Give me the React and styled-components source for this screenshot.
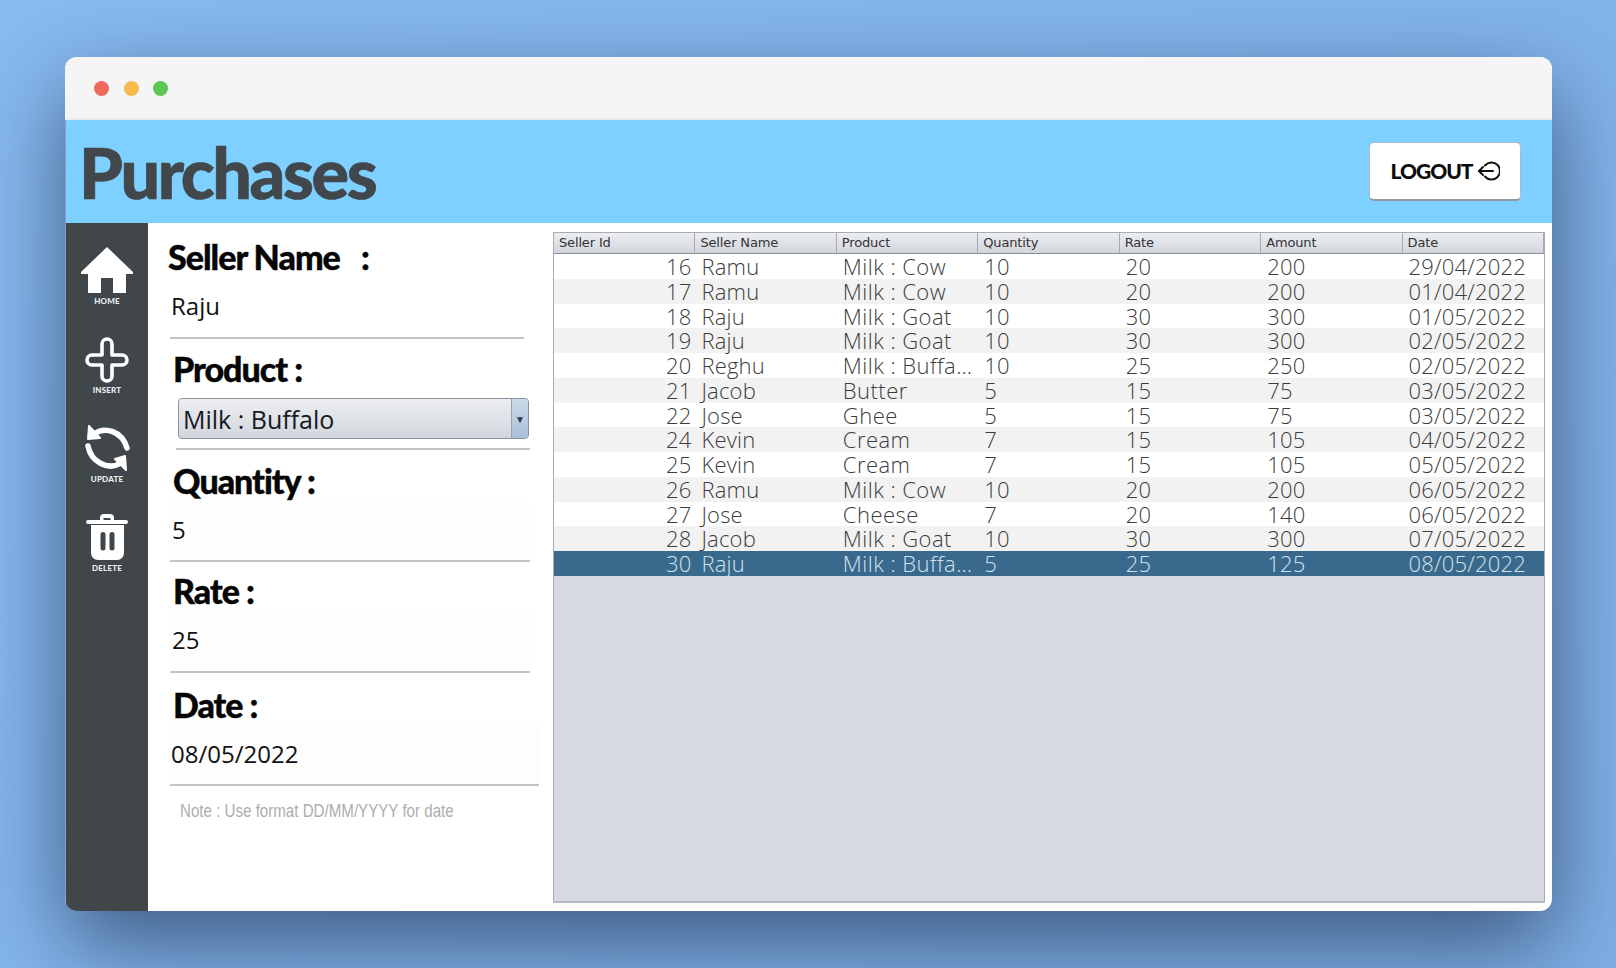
import React from "react";
import styled, { createGlobalStyle } from "styled-components";

const GlobalStyle = createGlobalStyle`
  html, body {
    margin: 0;
    padding: 0;
    height: 100%;
  }
  body {
    background: linear-gradient(135deg, #88bbf1 0%, #83b5ec 55%, #7fb0e6 100%);
    font-family: "Lato", "Liberation Sans", sans-serif;
    overflow: hidden;
  }
`;

const Page = styled.div`
  box-sizing: border-box;
  height: 968px;
  padding: 57px 64px 57px 65px;
`;

const Window = styled.div`
  height: 854px;
  display: flex;
  flex-direction: column;
  border-radius: 12px;
  overflow: hidden;
  background: #fff;
  box-shadow: 0 34px 90px rgba(25, 40, 70, 0.65);
`;

const TitleBar = styled.div`
  box-sizing: border-box;
  height: 63px;
  flex: none;
  display: flex;
  align-items: center;
  gap: 14.5px;
  padding: 2px 0 0 29px;
  background: #f5f5f5;
  border-bottom: 2px solid #ececec;
`;

const Dot = styled.span`
  width: 15px;
  height: 15px;
  border-radius: 50%;
  background: ${(p) => p.$color};
`;

const Header = styled.header`
  box-sizing: border-box;
  height: 103px;
  flex: none;
  display: flex;
  align-items: center;
  justify-content: space-between;
  padding: 0 31px 0 13px;
  background: #7dd0ff;
  border-left: 1px solid #8f9ac9;
`;

const Title = styled.h1`
  margin: 0;
  font-family: "Lato", sans-serif;
  font-weight: 900;
  font-size: 70px;
  line-height: 100px;
  letter-spacing: -2.4px;
  -webkit-text-stroke: 0.7px #41474b;
  color: #41474b;
`;

const LogoutButton = styled.button`
  box-sizing: border-box;
  width: 152px;
  height: 59px;
  margin-top: -1px;
  display: flex;
  align-items: center;
  justify-content: center;
  gap: 4px;
  background: #fff;
  border: 1px solid #a9bccb;
  border-bottom: 2px solid #8f9aa3;
  border-radius: 5px;
  font-family: "Lato", sans-serif;
  font-weight: 900;
  font-size: 21px;
  letter-spacing: -1px;
  color: #0c0c0c;
`;

const Body = styled.div`
  flex: 1;
  min-height: 0;
  display: flex;
  border-left: 1px solid #8f9ac9;
`;

const Sidebar = styled.nav`
  width: 82px;
  flex: none;
  display: flex;
  flex-direction: column;
  align-items: center;
  padding-top: 24px;
  background: #40464a;
`;

const NavItem = styled.div`
  height: 89px;
  display: flex;
  flex-direction: column;
  align-items: center;
  color: #fff;
`;

const NavIcon = styled.svg`
  width: 54px;
  height: 48px;
  display: block;
`;

const NavLabel = styled.span`
  margin-top: 1px;
  font-family: "Lato", sans-serif;
  font-size: 8px;
  line-height: 10px;
  font-weight: 900;
  letter-spacing: 0.2px;
  color: #eceeef;
`;

const Form = styled.section`
  width: 405px;
  flex: none;
  box-sizing: border-box;
  padding-left: 22px;
`;

const Field = styled.div`
  box-sizing: border-box;
  height: ${(p) => p.$height}px;
  width: ${(p) => p.$width || 360}px;
  margin-left: ${(p) => p.$shift || 0}px;
  display: flex;
  flex-direction: column;
  border-bottom: 2px solid #c3c4cb;
`;

const Label = styled.h2`
  margin: ${(p) => p.$top}px 0 0 ${(p) => p.$left}px;
  font-family: "Lato", sans-serif;
  font-weight: 900;
  font-size: 34px;
  line-height: 40px;
  letter-spacing: -1px;
  -webkit-text-stroke: 0.4px #060606;
  color: #060606;
`;

const Value = styled.div`
  flex: 1;
  display: flex;
  align-items: center;
  padding: 0 0 3px ${(p) => p.$left}px;
  font-family: "Open Sans", sans-serif;
  font-size: 24px;
  color: #111;
  background: ${(p) => (p.$tint ? "#fdfdfd" : "#fff")};
`;

const Combo = styled.div`
  box-sizing: border-box;
  width: 351px;
  height: 41px;
  margin: 9px 0 0 2px;
  display: flex;
  align-items: center;
  justify-content: space-between;
  padding-left: 4px;
  border: 1px solid #8c939c;
  border-radius: 4px;
  background: linear-gradient(#eceef1, #d3d6dd);
  font-family: "Open Sans", sans-serif;
  font-size: 25px;
  color: #151a24;
  overflow: hidden;
`;

const ComboArrow = styled.span`
  width: 16px;
  height: 100%;
  display: flex;
  align-items: center;
  justify-content: center;
  border-left: 1px solid #8fa5ba;
  background: linear-gradient(#c9d8e6, #a9c2d8);
  color: #33383f;
  font-size: 10px;
`;

const Note = styled.p`
  margin: 13px 0 0 10px;
  font-family: "Liberation Sans", sans-serif;
  font-size: 18px;
  line-height: 24px;
  white-space: nowrap;
  color: #adadad;
  transform: scaleX(0.84);
  transform-origin: left center;
`;

const TablePane = styled.div`
  box-sizing: border-box;
  width: 992px;
  height: 671px;
  margin-top: 9px;
  border: 1px solid #a9acb4;
  border-bottom: 2px solid #b6b8bf;
  background: #d6d9e2;
`;

const Row = styled.div`
  display: grid;
  grid-template-columns: repeat(7, 1fr);
`;

const HeaderCell = styled.div`
  box-sizing: border-box;
  height: 21px;
  padding-left: 5px;
  font-family: "DejaVu Sans", sans-serif;
  font-size: 13px;
  line-height: 20px;
  letter-spacing: -0.15px;
  color: #333;
  background: linear-gradient(#eceef1, #d2d5dc);
  border-bottom: 1px solid #8a8d94;
  border-right: 1px solid #a6a9b1;
`;

const DataRow = styled(Row)`
  height: 24.75px;
  background: ${(p) => (p.$selected ? "#39698c" : p.$odd ? "#f2f2f2" : "#fff")};
  color: ${(p) => (p.$selected ? "#d3e2ec" : "#3c3c3c")};
`;

const Cell = styled.div`
  min-width: 0;
  padding: 0 ${(p) => (p.$number ? "4px" : "6px")} 0 6px;
  text-align: ${(p) => (p.$number ? "right" : "left")};
  font-family: "Open Sans", sans-serif;
  font-weight: 300;
  font-size: 22px;
  line-height: 24px;
  letter-spacing: ${(p) => (p.$clip ? "0.45px" : "0.2px")};
  white-space: nowrap;
  overflow: ${(p) => (p.$clip ? "hidden" : "visible")};
  text-overflow: ellipsis;
`;

const columns = ["Seller Id", "Seller Name", "Product", "Quantity", "Rate", "Amount", "Date"];

const purchases = [
  [16, "Ramu", "Milk : Cow", 10, 20, 200, "29/04/2022"],
  [17, "Ramu", "Milk : Cow", 10, 20, 200, "01/04/2022"],
  [18, "Raju", "Milk : Goat", 10, 30, 300, "01/05/2022"],
  [19, "Raju", "Milk : Goat", 10, 30, 300, "02/05/2022"],
  [20, "Reghu", "Milk : Buffalo", 10, 25, 250, "02/05/2022"],
  [21, "Jacob", "Butter", 5, 15, 75, "03/05/2022"],
  [22, "Jose", "Ghee", 5, 15, 75, "03/05/2022"],
  [24, "Kevin", "Cream", 7, 15, 105, "04/05/2022"],
  [25, "Kevin", "Cream", 7, 15, 105, "05/05/2022"],
  [26, "Ramu", "Milk : Cow", 10, 20, 200, "06/05/2022"],
  [27, "Jose", "Cheese", 7, 20, 140, "06/05/2022"],
  [28, "Jacob", "Milk : Goat", 10, 30, 300, "07/05/2022"],
  [30, "Raju", "Milk : Buffalo", 5, 25, 125, "08/05/2022"],
];

const HomeIcon = () => (
  <NavIcon viewBox="0 0 54 48">
    <path fill="#fff" d="M27 0 L53 25 V27 H46 V46 H33 V31 H21 V46 H8 V27 H1 V25 Z" />
  </NavIcon>
);

const InsertIcon = () => (
  <NavIcon viewBox="0 0 54 48">
    <path
      fill="none"
      stroke="#fff"
      strokeWidth="3.6"
      strokeLinejoin="round"
      d="M22 8 a5 5 0 0 1 10 0 V19 H42 a5 5 0 0 1 0 10 H32 V40 a5 5 0 0 1 -10 0 V29 H12 a5 5 0 0 1 0 -10 H22 Z"
    />
  </NavIcon>
);

const UpdateIcon = () => (
  <NavIcon viewBox="0 0 54 48">
    <g fill="none" stroke="#fff" strokeWidth="5.5" strokeLinecap="round" strokeLinejoin="round">
      <path d="M14 9 C25 1 42 6 47 23" />
      <path d="M8 21 C11 37 28 46 41 38" />
    </g>
    <path fill="#fff" stroke="#fff" strokeWidth="2" strokeLinejoin="round" d="M9 1 L20 13 L8 14 Z" />
    <path fill="#fff" stroke="#fff" strokeWidth="2" strokeLinejoin="round" d="M45 31 L46 45 L35 34 Z" />
  </NavIcon>
);

const DeleteIcon = () => (
  <NavIcon viewBox="0 0 54 48">
    <path
      fill="#fff"
      fillRule="evenodd"
      d="M20 4 a4 4 0 0 1 4 -4 h6 a4 4 0 0 1 4 4 v2 h12 a1.5 1.5 0 0 1 0 4 H8 a1.5 1.5 0 0 1 0 -4 h12 Z M23.5 6 h7 v-2 h-7 Z"
    />
    <path
      fill="#fff"
      fillRule="evenodd"
      d="M11 11 H44 V39 a7 7 0 0 1 -7 7 H18 a7 7 0 0 1 -7 -7 Z M23 18 a2.5 2.5 0 0 0 -2.5 2.5 V34 a2.5 2.5 0 0 0 5 0 V20.5 A2.5 2.5 0 0 0 23 18 Z M32 18 a2.5 2.5 0 0 0 -2.5 2.5 V34 a2.5 2.5 0 0 0 5 0 V20.5 A2.5 2.5 0 0 0 32 18 Z"
    />
  </NavIcon>
);

const LogoutIcon = () => (
  <svg width="23" height="20" viewBox="0 0 23 20">
    <g fill="none" stroke="#111" strokeWidth="2" strokeLinecap="round" strokeLinejoin="round">
      <path d="M8 4.5 A8.5 8.5 0 1 1 8 15.5" />
      <path d="M16 10 H2" />
      <path d="M6 6 L2 10 L6 14" />
    </g>
  </svg>
);

const navItems = [
  { label: "HOME", icon: <HomeIcon /> },
  { label: "INSERT", icon: <InsertIcon /> },
  { label: "UPDATE", icon: <UpdateIcon /> },
  { label: "DELETE", icon: <DeleteIcon /> },
];

const App = () => {
  return (
    <Page>
      <GlobalStyle />
      <Window>
        <TitleBar>
          <Dot $color="#f0695f" />
          <Dot $color="#f5bb4f" />
          <Dot $color="#60c653" />
        </TitleBar>
        <Header>
          <Title>Purchases</Title>
          <LogoutButton>
            LOGOUT
            <LogoutIcon />
          </LogoutButton>
        </Header>
        <Body>
          <Sidebar>
            {navItems.map((item) => (
              <NavItem key={item.label}>
                {item.icon}
                <NavLabel>{item.label}</NavLabel>
              </NavItem>
            ))}
          </Sidebar>
          <Form>
            <Field $height={116} $width={354}>
              <Label $top={14} $left={-2}>Seller Name&nbsp;&nbsp;&nbsp;:</Label>
              <Value $left={1}>Raju</Value>
            </Field>
            <Field $height={111} $shift={6} $width={354}>
              <Label $top={10} $left={-3}>Product :</Label>
              <Combo>
                Milk : Buffalo
                <ComboArrow>▼</ComboArrow>
              </Combo>
            </Field>
            <Field $height={112}>
              <Label $top={11} $left={3}>Quantity :</Label>
              <Value $left={2} $tint>5</Value>
            </Field>
            <Field $height={111}>
              <Label $top={9} $left={3}>Rate :</Label>
              <Value $left={2} $tint>25</Value>
            </Field>
            <Field $height={113} $width={369}>
              <Label $top={12} $left={3}>Date :</Label>
              <Value $left={1} $tint>08/05/2022</Value>
            </Field>
            <Note>Note : Use format DD/MM/YYYY for date</Note>
          </Form>
          <TablePane>
            <Row>
              {columns.map((name) => (
                <HeaderCell key={name}>{name}</HeaderCell>
              ))}
            </Row>
            {purchases.map((row, i) => (
              <DataRow key={row[0]} $odd={i % 2 === 1} $selected={row[0] === 30}>
                {row.map((value, c) => (
                  <Cell key={c} $number={c === 0} $clip={c === 2}>{value}</Cell>
                ))}
              </DataRow>
            ))}
          </TablePane>
        </Body>
      </Window>
    </Page>
  );
};

export default App;
